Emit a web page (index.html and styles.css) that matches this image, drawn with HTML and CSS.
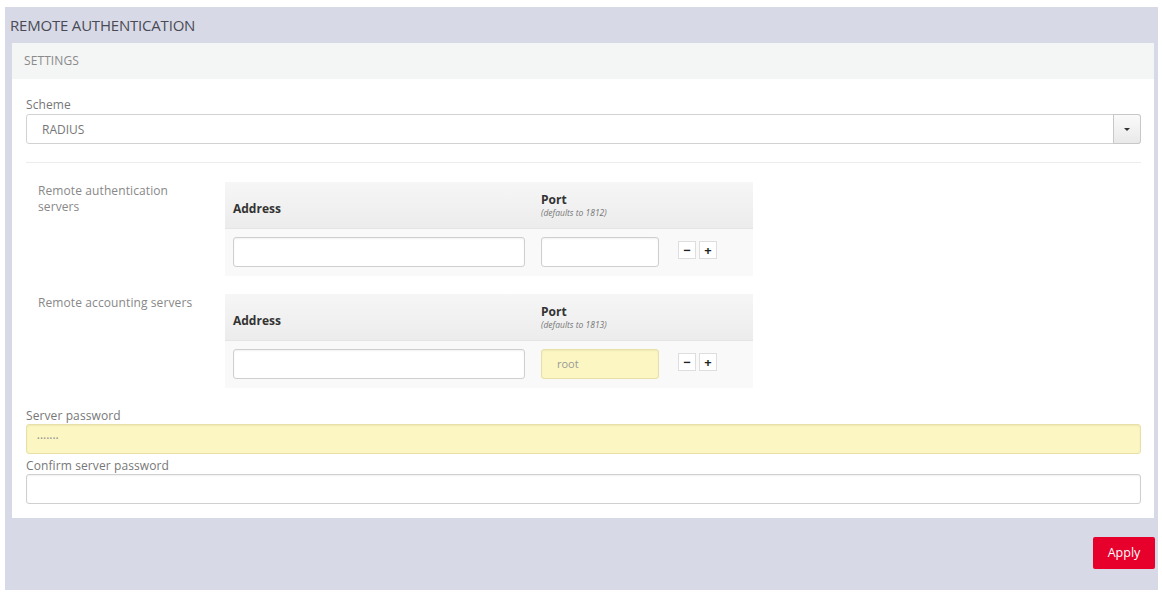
FILE: index.html
```html
<!DOCTYPE html>
<html>
<head>
<meta charset="utf-8">
<link rel="stylesheet" href="styles.css">
</head>
<body>
<div class="outer">
  <div class="title">REMOTE AUTHENTICATION</div>
  <div class="panel">
    <div class="panel-head">SETTINGS</div>
    <div class="panel-body">
      <div class="label">Scheme</div>
      <div class="select">
        <span class="select-value">RADIUS</span>
        <span class="select-btn"><span class="caret"></span></span>
      </div>
      <div class="sep"></div>

      <div class="group">
        <div class="group-label"><span class="gl-text">Remote authentication servers</span></div>
        <div class="srv-table">
          <div class="srv-head">
            <div class="col-addr"><span class="th">Address</span></div>
            <div class="col-port"><span class="th">Port</span><span class="hint">(defaults to 1812)</span></div>
          </div>
          <div class="srv-row">
            <div class="input addr"></div>
            <div class="input port"></div>
            <div class="btns"><span class="sq">&#8722;</span><span class="sq">+</span></div>
          </div>
        </div>
      </div>

      <div class="group second">
        <div class="group-label"><span class="gl-text">Remote accounting servers</span></div>
        <div class="srv-table">
          <div class="srv-head">
            <div class="col-addr"><span class="th">Address</span></div>
            <div class="col-port"><span class="th">Port</span><span class="hint">(defaults to 1813)</span></div>
          </div>
          <div class="srv-row">
            <div class="input addr"></div>
            <div class="input port filled">root</div>
            <div class="btns"><span class="sq">&#8722;</span><span class="sq">+</span></div>
          </div>
        </div>
      </div>

      <div class="label pw-label">Server password</div>
      <div class="input wide filled dots">&bull;&bull;&bull;&bull;&bull;&bull;&bull;</div>
      <div class="label confirm-label">Confirm server password</div>
      <div class="input wide"></div>
    </div>
  </div>
  <div class="actions"><span class="apply">Apply</span></div>
</div>
</body>
</html>
```
FILE: styles.css
```css
html, body {
  margin: 0;
  padding: 0;
  background: #ffffff;
  font-family: "Open Sans", "DejaVu Sans", sans-serif;
}
.outer {
  margin: 7px 4px 0 5px;
  height: 583px;
  background: #d7dae6;
  padding: 0 4px 0 7px;
  box-sizing: border-box;
}
.title {
  height: 36px;
  line-height: 36px;
  margin-left: -2px;
  font-size: 15px;
  color: #4a4a55;
  letter-spacing: -0.2px;
}
.panel {
  background: #ffffff;
}
.panel-head {
  height: 36px;
  line-height: 36px;
  background: #f4f5f5;
  padding-left: 12px;
  font-size: 12px;
  color: #8a8a8a;
  letter-spacing: 0.1px;
}
.panel-body {
  padding: 17px 13px 14px 14px;
}
.label {
  font-size: 12px;
  line-height: 17px;
  color: #777;
  letter-spacing: 0.1px;
}
.select {
  margin-top: 1px;
  height: 30px;
  border: 1px solid #d2d2d2;
  border-radius: 3px;
  box-sizing: border-box;
  display: flex;
  align-items: center;
  justify-content: space-between;
}
.select-value {
  padding-left: 15px;
  font-size: 12px;
  color: #777;
}
.select-btn {
  width: 28px;
  height: 30px;
  margin: -1px -1px -1px 0;
  box-sizing: border-box;
  border: 1px solid #c8c8c8;
  border-radius: 0 3px 3px 0;
  background: linear-gradient(#fafafa, #e9e9e9);
  display: flex;
  align-items: center;
  justify-content: center;
}
.caret {
  width: 0;
  height: 0;
  border-left: 3px solid transparent;
  border-right: 3px solid transparent;
  border-top: 3px solid #333;
}
.sep {
  height: 1px;
  background: #ececec;
  margin: 18px 0 19px;
}
.group {
  display: flex;
}
.group.second {
  margin-top: 18px;
}
.group-label {
  width: 187px;
  padding-left: 12px;
  padding-top: 1px;
  font-size: 12px;
  line-height: 16px;
  color: #888;
  letter-spacing: 0.1px;
}
.gl-text {
  display: block;
  width: 165px;
}
.srv-table {
  width: 528px;
  background: #f9f9f9;
}
.srv-head {
  height: 47px;
  box-sizing: border-box;
  background: linear-gradient(#f6f6f6, #ececec);
  border-bottom: 1px solid #e4e4e4;
  display: flex;
  padding-left: 8px;
}
.col-addr {
  width: 308px;
  display: flex;
  align-items: flex-end;
  padding-bottom: 12px;
  box-sizing: border-box;
}
.col-port {
  display: flex;
  flex-direction: column;
  padding-top: 10px;
}
.th {
  font-size: 12px;
  font-weight: 700;
  color: #333;
  line-height: 15px;
}
.hint {
  font-size: 8.5px;
  font-style: italic;
  color: #777;
  line-height: 11px;
}
.srv-row {
  display: flex;
  align-items: center;
  padding: 8px 0 9px 8px;
  height: 47px;
  box-sizing: border-box;
}
.input {
  height: 30px;
  border: 1px solid #cfcfcf;
  border-radius: 3px;
  box-sizing: border-box;
  background: #fff;
  box-shadow: inset 0 1px 2px rgba(0,0,0,0.06);
  font-size: 11px;
  color: #999;
  line-height: 28px;
  padding-left: 15px;
}
.input.addr {
  width: 292px;
}
.input.port {
  width: 118px;
  margin-left: 16px;
}
.input.filled {
  background: #fcf6c2;
  border-color: #e8e0a6;
}
.input.wide {
  width: 100%;
}
.input.dots {
  font-size: 7px;
  color: #999;
  padding-left: 10px;
  letter-spacing: 0.5px;
}
.btns {
  display: flex;
  margin-left: 19px;
  gap: 3px;
  margin-top: -4px;
}
.sq {
  width: 18px;
  height: 18px;
  box-sizing: border-box;
  border: 1px solid #dedede;
  background: #fff;
  display: flex;
  align-items: center;
  justify-content: center;
  font-size: 13px;
  font-weight: 700;
  color: #222;
  line-height: 1;
}
.pw-label {
  margin-top: 19px;
}
.confirm-label {
  margin-top: 3px;
}
.actions {
  display: flex;
  justify-content: flex-end;
  margin-top: 19px;
  margin-right: -1px;
}
.apply {
  width: 62px;
  height: 32px;
  line-height: 32px;
  text-align: center;
  background: #e6002b;
  color: #fff;
  font-size: 12.5px;
  border-radius: 2px;
}
```
